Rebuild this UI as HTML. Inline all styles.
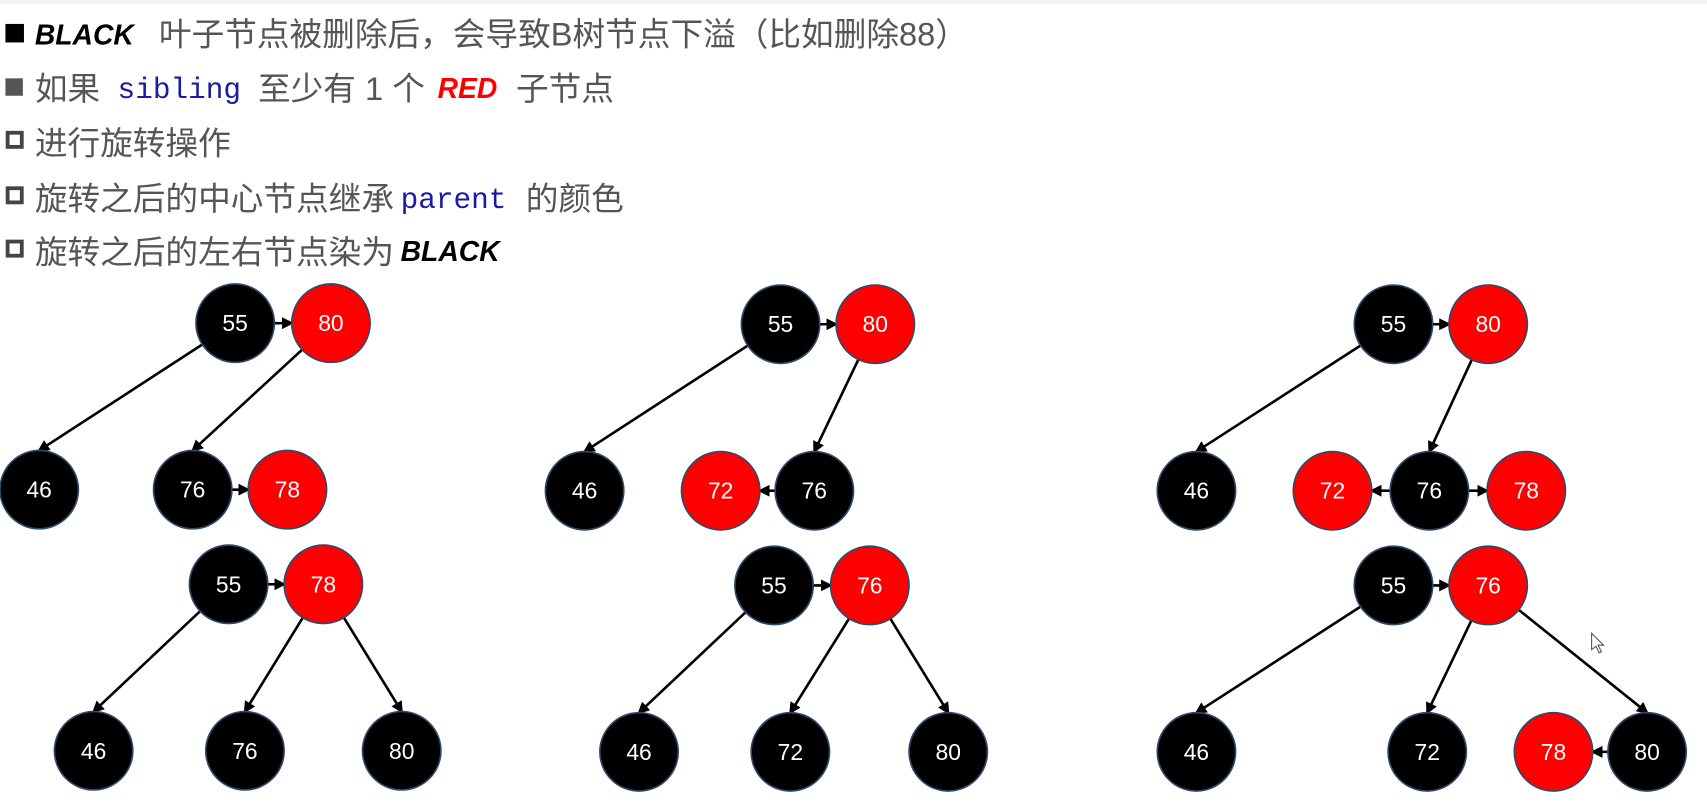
<!DOCTYPE html>
<html><head><meta charset="utf-8"><style>
html,body{margin:0;padding:0;background:#fff;width:1707px;height:803px;overflow:hidden}
svg{display:block}
.t{font-family:"Liberation Sans","Noto Sans CJK SC",sans-serif;font-size:30px;fill:#555}
.b{font-family:"Liberation Sans",sans-serif;font-size:26px;font-weight:bold;font-style:italic}
.m{font-family:"Liberation Mono",monospace;font-size:27px;fill:#1a1aa6}
.n{font-family:"Liberation Sans",sans-serif;font-size:21px;fill:#fff;text-anchor:middle;dominant-baseline:central}
</style></head><body>
<svg id="s" width="1707" height="803" viewBox="0 0 1568 738" preserveAspectRatio="none" xmlns="http://www.w3.org/2000/svg">
<defs><marker id="a" markerWidth="11" markerHeight="11" refX="9" refY="5.5" orient="auto" markerUnits="userSpaceOnUse"><path d="M0,0 L11,5.5 L0,11 z" fill="#000"/></marker></defs>
<rect x="0" y="0" width="1568" height="4" fill="#f2f2f2"/>
<rect x="5" y="22" width="17" height="17" fill="#000"/>
<text x="32" y="41" class="b" fill="#000">BLACK</text>
<text x="146" y="42" class="t">叶子节点被删除后，会导致B树节点下溢（比如删除88）</text>
<rect x="5" y="72" width="16" height="16" fill="#555"/>
<text x="32" y="92" class="t">如果</text>
<text x="108" y="90" class="m">sibling</text>
<text x="237" y="92" class="t">至少有 1 个</text>
<text x="402" y="90" class="b" fill="#f00">RED</text>
<text x="474" y="92" class="t">子节点</text>
<rect x="7" y="122" width="13" height="13" fill="none" stroke="#444" stroke-width="3.5"/>
<text x="32" y="142" class="t">进行旋转操作</text>
<rect x="7" y="173" width="13" height="13" fill="none" stroke="#444" stroke-width="3.5"/>
<text x="32" y="193" class="t">旋转之后的中心节点继承</text>
<text x="368" y="191" class="m">parent</text>
<text x="483" y="193" class="t">的颜色</text>
<rect x="7" y="222" width="13" height="13" fill="none" stroke="#444" stroke-width="3.5"/>
<text x="32" y="242" class="t">旋转之后的左右节点染为</text>
<text x="368" y="240" class="b" fill="#000">BLACK</text>
<g id="edges" stroke="#000" stroke-width="2.4"></g>
<g stroke="#2e4a6b" stroke-width="1.5">
<ellipse cx="216" cy="297" rx="36" ry="36"/><ellipse cx="304" cy="297" rx="36" ry="36" fill="#f00"/>
<ellipse cx="36" cy="450" rx="36" ry="36"/><ellipse cx="177" cy="450" rx="36" ry="36"/><ellipse cx="264" cy="450" rx="36" ry="36" fill="#f00"/>
<ellipse cx="717" cy="298" rx="36" ry="36"/><ellipse cx="804" cy="298" rx="36" ry="36" fill="#f00"/>
<ellipse cx="537" cy="451" rx="36" ry="36"/><ellipse cx="662" cy="451" rx="36" ry="36" fill="#f00"/><ellipse cx="748" cy="451" rx="36" ry="36"/>
<ellipse cx="1280" cy="298" rx="36" ry="36"/><ellipse cx="1367" cy="298" rx="36" ry="36" fill="#f00"/>
<ellipse cx="1099" cy="451" rx="36" ry="36"/><ellipse cx="1224" cy="451" rx="36" ry="36" fill="#f00"/><ellipse cx="1313" cy="451" rx="36" ry="36"/><ellipse cx="1402" cy="451" rx="36" ry="36" fill="#f00"/>
<ellipse cx="210" cy="537" rx="36" ry="36"/><ellipse cx="297" cy="537" rx="36" ry="36" fill="#f00"/>
<ellipse cx="86" cy="690" rx="36" ry="36"/><ellipse cx="225" cy="690" rx="36" ry="36"/><ellipse cx="369" cy="690" rx="36" ry="36"/>
<ellipse cx="711" cy="538" rx="36" ry="36"/><ellipse cx="799" cy="538" rx="36" ry="36" fill="#f00"/>
<ellipse cx="587" cy="691" rx="36" ry="36"/><ellipse cx="726" cy="691" rx="36" ry="36"/><ellipse cx="871" cy="691" rx="36" ry="36"/>
<ellipse cx="1280" cy="538" rx="36" ry="36"/><ellipse cx="1367" cy="538" rx="36" ry="36" fill="#f00"/>
<ellipse cx="1099" cy="691" rx="36" ry="36"/><ellipse cx="1311" cy="691" rx="36" ry="36"/><ellipse cx="1427" cy="691" rx="36" ry="36" fill="#f00"/><ellipse cx="1513" cy="691" rx="36" ry="36"/>
</g>
<g class="n">
<text class="n" x="216" y="297">55</text><text class="n" x="304" y="297">80</text>
<text class="n" x="36" y="450">46</text><text class="n" x="177" y="450">76</text><text class="n" x="264" y="450">78</text>
<text class="n" x="717" y="298">55</text><text class="n" x="804" y="298">80</text>
<text class="n" x="537" y="451">46</text><text class="n" x="662" y="451">72</text><text class="n" x="748" y="451">76</text>
<text class="n" x="1280" y="298">55</text><text class="n" x="1367" y="298">80</text>
<text class="n" x="1099" y="451">46</text><text class="n" x="1224" y="451">72</text><text class="n" x="1313" y="451">76</text><text class="n" x="1402" y="451">78</text>
<text class="n" x="210" y="537">55</text><text class="n" x="297" y="537">78</text>
<text class="n" x="86" y="690">46</text><text class="n" x="225" y="690">76</text><text class="n" x="369" y="690">80</text>
<text class="n" x="711" y="538">55</text><text class="n" x="799" y="538">76</text>
<text class="n" x="587" y="691">46</text><text class="n" x="726" y="691">72</text><text class="n" x="871" y="691">80</text>
<text class="n" x="1280" y="538">55</text><text class="n" x="1367" y="538">76</text>
<text class="n" x="1099" y="691">46</text><text class="n" x="1311" y="691">72</text><text class="n" x="1427" y="691">78</text><text class="n" x="1513" y="691">80</text>
</g>
<path d="M1462,582 l0,15 l4,-3 l3,6 l2,-1 l-3,-6 l5,0 z" fill="#fff" stroke="#555" stroke-width="1"/>
</svg>
<script>
var R=36,g=document.getElementById('edges'),NS="http://www.w3.org/2000/svg";
function L(x1,y1,x2,y2){var l=document.createElementNS(NS,'line');l.setAttribute('x1',x1);l.setAttribute('y1',y1);l.setAttribute('x2',x2);l.setAttribute('y2',y2);l.setAttribute('marker-end','url(#a)');g.appendChild(l);}
function D(px,py,cx,cy){var tx=cx,ty=cy-R,dx=tx-px,dy=ty-py,d=Math.hypot(dx,dy);L(px+dx/d*R,py+dy/d*R,tx,ty);}
function H(px,py,cx,cy){var s=cx>px?1:-1;L(px+s*R,py,cx-s*R,cy);}
D(216,297,36,450);D(304,297,177,450);H(216,297,304,297);H(177,450,264,450);
D(717,298,537,451);D(804,298,748,451);H(717,298,804,298);H(748,451,662,451);
D(1280,298,1099,451);D(1367,298,1313,451);H(1280,298,1367,298);H(1313,451,1224,451);H(1313,451,1402,451);
D(210,537,86,690);H(210,537,297,537);D(297,537,225,690);D(297,537,369,690);
D(711,538,587,691);H(711,538,799,538);D(799,538,726,691);D(799,538,871,691);
D(1280,538,1099,691);H(1280,538,1367,538);D(1367,538,1311,691);D(1367,538,1513,691);H(1513,691,1427,691);
</script>
</body></html>
